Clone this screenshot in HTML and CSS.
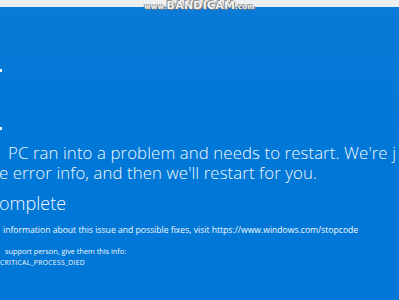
FILE: index.html
```html
<!DOCTYPE html>
<html lang="en">
<head>
    <meta charset="UTF-8">
    <meta name="viewport" content="width=device-width, initial-scale=1.0">
    <title>Stop error</title>
    <link rel="stylesheet" href="styles.css">
</head>
<body>
    <div class="screen">
        <div class="topbar"></div>
        <div class="watermark"><span class="wm-small">www.</span>BANDICAM<span class="wm-small">.com</span></div>

        <div class="face">
            <span class="dot dot-top"></span>
            <span class="dot dot-bottom"></span>
        </div>

        <div class="message">
            <div class="line line-first">PC ran into a problem and needs to restart. We're j</div>
            <div class="line line-second">e error info, and then we'll restart for you.</div>
        </div>

        <div class="progress">omplete</div>

        <div class="more">information about this issue and possible fixes, visit https://www.windows.com/stopcode</div>

        <div class="support">
            <div class="support-line">support person, give them this info:</div>
            <div class="stop-line">CRITICAL_PROCESS_DIED</div>
        </div>
    </div>
</body>
</html>
```

FILE: styles.css
```css
body {
    margin: 0;
    padding: 0;
    background-color: #0078d7;
    overflow: hidden;
    font-family: "Open Sans", "Noto Sans", sans-serif;
    color: #f3f8fd;
}
.screen {
    position: relative;
    width: 399px;
    height: 300px;
    overflow: hidden;
    background: linear-gradient(#0a7ad6, #0078d7 40%, #0077d6);
}
.topbar {
    height: 7px;
    background: #eeeff0;
}
.watermark {
    position: absolute;
    top: 0;
    left: 0;
    right: 0;
    text-align: center;
    font-family: "DejaVu Sans", sans-serif;
    font-weight: bold;
    font-size: 11px;
    line-height: 12px;
    letter-spacing: 0.2px;
    color: #f4f4f4;
    text-shadow: 0 0 1px #6a6a6a, 1px 1px 0 #7a7a7a, -1px -1px 0 #9a9a9a;
}
.wm-small {
    font-size: 7px;
}
.face {
    height: 136px;
    padding-top: 62px;
    box-sizing: border-box;
}
.dot {
    display: block;
    width: 2px;
    height: 3px;
    background: #e8f2fc;
}
.dot-bottom {
    margin-top: 55px;
}
.message {
    font-size: 16.8px;
    font-weight: 300;
    line-height: 20px;
    letter-spacing: 0.1px;
    white-space: nowrap;
}
.line-first {
    padding-left: 8px;
}
.line-second {
    margin-left: -1px;
}
.progress {
    margin-top: 9px;
    margin-left: -1px;
    font-size: 18px;
    font-weight: 300;
    line-height: 22px;
}
.more {
    margin-top: 10px;
    padding-left: 3px;
    font-size: 8.6px;
    line-height: 12px;
    white-space: nowrap;
}
.support {
    margin-top: 9px;
    font-size: 7.3px;
    line-height: 12px;
    white-space: nowrap;
}
.support-line {
    padding-left: 5px;
}
.stop-line {
    font-size: 6.8px;
    letter-spacing: 0.3px;
}
```
